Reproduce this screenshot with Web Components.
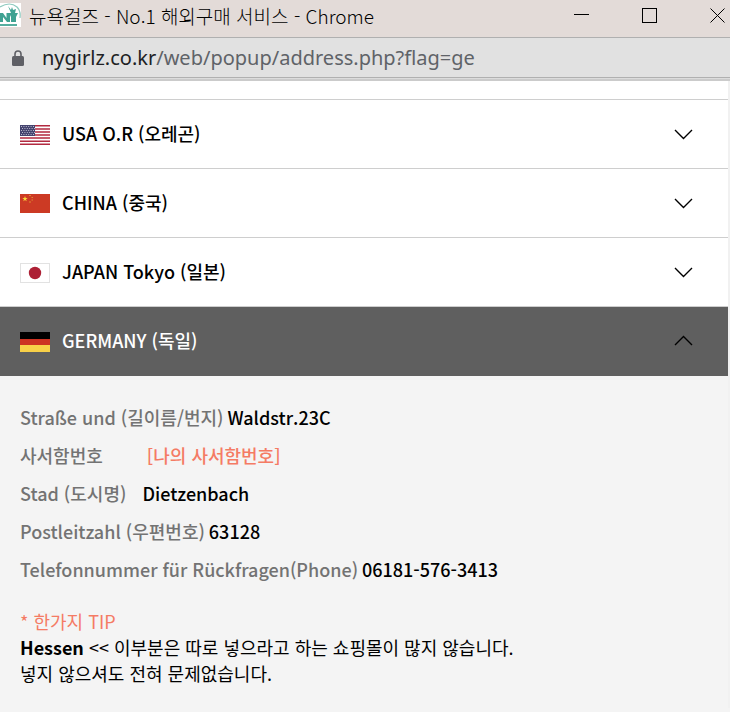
<!DOCTYPE html>
<html lang="ko">
<head>
<meta charset="utf-8">
<meta name="viewport" content="width=device-width, initial-scale=1">
<title>뉴욕걸즈 - No.1 해외구매 서비스</title>
<style>
  html, body {
    margin: 0;
    min-height: 100%;
    background: #f4f4f4;
  }
  body {
    font-family: "Noto Sans CJK KR", sans-serif;
    color: #000;
  }
</style>
</head>
<body>
  <popup-window>
    <window-titlebar slot="chrome">뉴욕걸즈 - No.1 해외구매 서비스 - Chrome</window-titlebar>
    <address-bar slot="chrome" host="nygirlz.co.kr" path="/web/popup/address.php?flag=ge"></address-bar>

    <country-item flag="us">USA O.R (오레곤)</country-item>
    <country-item flag="cn">CHINA (중국)</country-item>
    <country-item flag="jp">JAPAN Tokyo (일본)</country-item>
    <country-item flag="de" open>GERMANY (독일)
      <address-field slot="panel" label="Straße und (길이름/번지)">Waldstr.23C</address-field>
      <address-field slot="panel" label="사서함번호" gap="wide" accent>[나의 사서함번호]</address-field>
      <address-field slot="panel" label="Stad (도시명)" gap="medium">Dietzenbach</address-field>
      <address-field slot="panel" label="Postleitzahl (우편번호)">63128</address-field>
      <address-field slot="panel" label="Telefonnummer für Rückfragen(Phone)">06181-576-3413</address-field>
      <shipping-tip slot="panel" heading="* 한가지 TIP"><b>Hessen</b> &lt;&lt; 이부분은 따로 넣으라고 하는 쇼핑몰이 많지 않습니다.<br>넣지 않으셔도 전혀 문제없습니다.</shipping-tip>
    </country-item>
  </popup-window>

<script>
const FLAGS = {
  us: `
    <svg viewBox="0 0 30 20" aria-hidden="true">
      <rect width="30" height="20" fill="#fff"/>
      <path d="M0 .8h30M0 3.9h30M0 7h30M0 10h30M0 13.1h30M0 16.2h30M0 19.2h30" stroke="#b22a40" stroke-width="1.54"/>
      <rect width="15" height="11" fill="#45446f"/>
      <path d="M1 1.500h14M2 3.500h13M1 5.500h14M2 7.500h13M1 9.500h14" stroke="#b9b9cc" stroke-width="1" stroke-dasharray="1 1.400"/>
    </svg>`,
  cn: `
    <svg viewBox="0 0 30 20" aria-hidden="true">
      <rect width="30" height="19" fill="#cc3a24"/>
      <path d="M5 2l.7 2h2L6 5.200l.7 2L5 6l-1.700 1.200.7-2L2.300 4h2z" fill="#fbd83b"/>
      <path d="M9 1.500h2M11.500 3.500h1.500M11.500 6h1.500M9 8h2" stroke="#dc8a30" stroke-width="1"/>
    </svg>`,
  jp: `
    <svg viewBox="0 0 30 20" aria-hidden="true">
      <rect x=".5" y=".5" width="29" height="19" fill="#fff" stroke="#e2e2e2"/>
      <circle cx="15" cy="10" r="6.200" fill="#ad2035"/>
    </svg>`,
  de: `
    <svg viewBox="0 0 30 20" aria-hidden="true">
      <rect width="30" height="7" fill="#000"/>
      <rect y="7" width="30" height="6" fill="#cd3222"/>
      <rect y="13" width="30" height="7" fill="#f8d048"/>
    </svg>`
};

class PopupWindow extends HTMLElement {
  constructor() {
    super();
    this.attachShadow({ mode: 'open' });
    this.shadowRoot.innerHTML = `
      <style>
        :host {
          display: block;
        }
        main {
          background: #fff;
          border-right: 2px solid #f1f1f1;
          padding-top: 18px;
        }
      </style>
      <header><slot name="chrome"></slot></header>
      <main><slot></slot></main>
    `;
  }
}

class WindowTitlebar extends HTMLElement {
  constructor() {
    super();
    this.attachShadow({ mode: 'open' });
    this.shadowRoot.innerHTML = `
      <style>
        :host {
          display: flex;
          align-items: center;
          height: 37px;
          background: #e3dbd8;
          border-bottom: 1px solid #b0b0b0;
          overflow: hidden;
        }
        .logo {
          width: 21px;
          height: 24px;
          margin-right: 8px;
          margin-bottom: 7px;
          flex-shrink: 0;
        }
        .title {
          flex: 1;
          min-width: 0;
          margin-bottom: 6px;
          font-size: 19px;
          font-weight: 300;
          line-height: 28px;
          white-space: nowrap;
        }
        .controls {
          display: flex;
          gap: 36px;
          margin-right: -4px;
          margin-bottom: 8px;
        }
        button {
          width: 32px;
          height: 24px;
          padding: 0;
          border: 0;
          background: none;
          display: flex;
          align-items: center;
          justify-content: center;
        }
        button svg {
          width: 16px;
          height: 16px;
          fill: none;
          stroke: #000;
          shape-rendering: crispEdges;
        }
        .close svg {
          shape-rendering: auto;
        }
      </style>
      <svg class="logo" viewBox="0 0 21 24" aria-hidden="true">
        <rect width="21" height="24" fill="#fff"/>
        <path d="M0 4Q10-2 17 4Q21 8 20 15" fill="none" stroke="#8ecabf" stroke-width="1.200"/>
        <path d="M0 19V10h3l3.500 5v-5H10v9H7l-4-5v5z" fill="#3fa292"/>
        <path d="M8 3l3 4 1-3 1 3 3-1-1 4h3l-2 4v5h-5v-5l-2-4h2z" fill="#3fa292"/>
        <path d="M0 22h17" stroke="#56ae9f" stroke-width="2"/>
      </svg>
      <span class="title"><slot></slot></span>
      <div class="controls">
        <button aria-label="Minimize"><svg viewBox="0 0 16 16"><path d="M0 7.500h15"/></svg></button>
        <button aria-label="Maximize"><svg viewBox="0 0 16 16"><path d="M.5 1.500h14v14H.5z"/></svg></button>
        <button class="close" aria-label="Close"><svg viewBox="0 0 16 16"><path d="M.5 1.500l14 14M14.500 1.500l-14 14"/></svg></button>
      </div>
    `;
  }
}

class AddressBar extends HTMLElement {
  connectedCallback() {
    this.attachShadow({ mode: 'open' });
    this.shadowRoot.innerHTML = `
      <style>
        :host {
          display: flex;
          align-items: center;
          height: 39px;
          padding: 0 12px;
          background: #e1e1e1;
          border-bottom: 1px solid #b0b0b0;
          box-shadow: 0 1px #dcdcdc, 0 3px #cbcbcb;
          margin-bottom: 3px;
          font-family: "Noto Sans", sans-serif;
          font-size: 20px;
          line-height: 38px;
          white-space: nowrap;
        }
        svg {
          width: 12px;
          height: 16px;
          margin-right: 18px;
          flex-shrink: 0;
        }
        .host {
          color: #202124;
        }
        .path {
          color: #5f6368;
        }
      </style>
      <svg viewBox="0 0 12 16" aria-hidden="true">
        <path d="M3 7V4a3 3 0 0 1 6 0v3" fill="none" stroke="#5f6066" stroke-width="1.600"/>
        <rect y="6" width="12" height="10" rx="1.500" fill="#5f6066"/>
      </svg>
      <span><span class="host">${this.getAttribute('host')}</span><span class="path">${this.getAttribute('path')}</span></span>
    `;
  }
}

class CountryItem extends HTMLElement {
  connectedCallback() {
    this.attachShadow({ mode: 'open' });
    this.render();
    this.shadowRoot.querySelector('button').addEventListener('click', () => this.toggle());
  }

  toggle() {
    const open = this.toggleAttribute('open');
    this.shadowRoot.querySelector('button').setAttribute('aria-expanded', open);
  }

  render() {
    this.shadowRoot.innerHTML = `
      <style>
        :host {
          display: block;
          border-top: 1px solid #cecece;
        }
        button {
          display: flex;
          align-items: center;
          width: 100%;
          height: 68px;
          padding: 0 35px 0 20px;
          border: 0;
          background: #fff;
          color: #000;
          font: inherit;
          font-size: 18px;
          font-weight: 500;
          text-align: left;
          cursor: pointer;
        }
        :host([open]) button {
          box-sizing: content-box;
          width: calc(100% - 55px);
          border-bottom: 1px solid #5f5f5f;
          background: #5f5f5f;
          color: #fff;
        }
        .flag {
          width: 30px;
          height: 20px;
          margin-right: 12px;
          margin-top: 2px;
        }
        .flag svg {
          display: block;
        }
        .name {
          flex: 1;
          margin-bottom: 2px;
        }
        .chevron {
          width: 19px;
          height: 12px;
          fill: none;
          stroke: #000;
          stroke-width: 1.400;
        }
        :host([open]) .chevron {
          transform: rotate(180deg);
        }
        .panel {
          display: none;
          padding: 22px 20px;
          background: #f4f4f4;
        }
        :host([open]) .panel {
          display: block;
        }
      </style>
      <button aria-expanded="${this.hasAttribute('open')}">
        <span class="flag">${FLAGS[this.getAttribute('flag')]}</span>
        <span class="name"><slot></slot></span>
        <svg class="chevron" viewBox="0 0 19 12" aria-hidden="true"><path d="M1 2l8.500 8.500L18 2"/></svg>
      </button>
      <div class="panel"><slot name="panel"></slot></div>
    `;
  }
}

class AddressField extends HTMLElement {
  connectedCallback() {
    this.attachShadow({ mode: 'open' });
    this.shadowRoot.innerHTML = `
      <style>
        :host {
          display: flex;
          flex-wrap: wrap;
          gap: 0 4px;
          font-size: 18px;
          font-weight: 500;
          line-height: 38px;
        }
        :host([gap="medium"]) {
          column-gap: 16px;
        }
        :host([gap="wide"]) {
          column-gap: 44px;
        }
        .label {
          color: #737373;
        }
        :host([accent]) .value {
          color: #f47b64;
        }
      </style>
      <span class="label">${this.getAttribute('label')}</span>
      <span class="value"><slot></slot></span>
    `;
  }
}

class ShippingTip extends HTMLElement {
  connectedCallback() {
    this.attachShadow({ mode: 'open' });
    this.shadowRoot.innerHTML = `
      <style>
        :host {
          display: block;
          margin-top: 20px;
          font-size: 18px;
          font-weight: 400;
          line-height: 26px;
        }
        .heading {
          color: #f47b64;
        }
      </style>
      <div class="heading">${this.getAttribute('heading')}</div>
      <div><slot></slot></div>
    `;
  }
}

customElements.define('popup-window', PopupWindow);
customElements.define('window-titlebar', WindowTitlebar);
customElements.define('address-bar', AddressBar);
customElements.define('country-item', CountryItem);
customElements.define('address-field', AddressField);
customElements.define('shipping-tip', ShippingTip);
</script>
</body>
</html>
